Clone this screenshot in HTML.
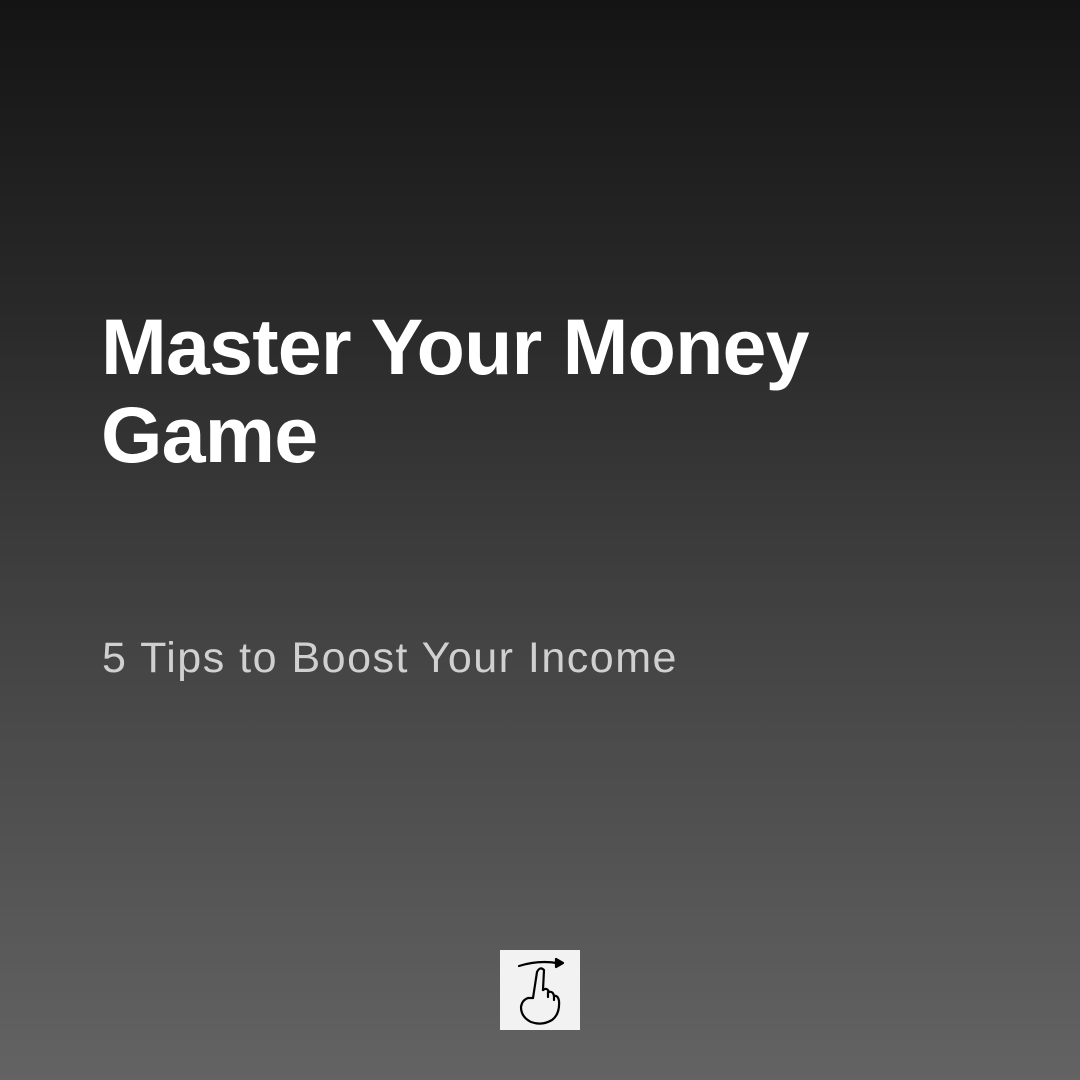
<!DOCTYPE html>
<html><head><style>
html,body{margin:0;padding:0}
body{width:1080px;height:1080px;position:relative;overflow:hidden;background:linear-gradient(to bottom,#141414 0%,#2a2a2a 30%,#444 60%,#636363 100%);font-family:"Liberation Sans",sans-serif}
h1{position:absolute;left:101px;top:303px;margin:0;font-size:79px;line-height:88px;font-weight:bold;color:#fff;letter-spacing:-0.8px}
p{position:absolute;left:102px;top:630px;margin:0;font-size:43px;line-height:56px;color:#d0d0d0;letter-spacing:1.5px}
.ic{position:absolute;left:500px;top:950px;width:80px;height:80px;background:#f2f2f2}
</style></head><body>
<h1>Master Your Money<br>Game</h1>
<p>5 Tips to Boost Your Income</p>
<div class="ic"><svg width="80" height="80" viewBox="0 0 80 80" fill="none" stroke="#000" stroke-width="2.2" stroke-linecap="round" stroke-linejoin="round">
<path d="M19 16 Q38 10 57 13"/><path d="M56 9 L63 13 L56 17 Z" fill="#000"/>
<path d="M33 48 L37 22 Q40 16 44 20 L43 40"/>
<path d="M43 40 Q47 37 49 42 Q53 41 54 46 Q58 45 59 51 Q60 64 52 70 Q42 76 31 72 Q21 67 21 57 Q22 50 28 48 L33 48"/>
<path d="M48 42 L48 47 M54 46 L54 50"/>
</svg></div>
</body></html>
